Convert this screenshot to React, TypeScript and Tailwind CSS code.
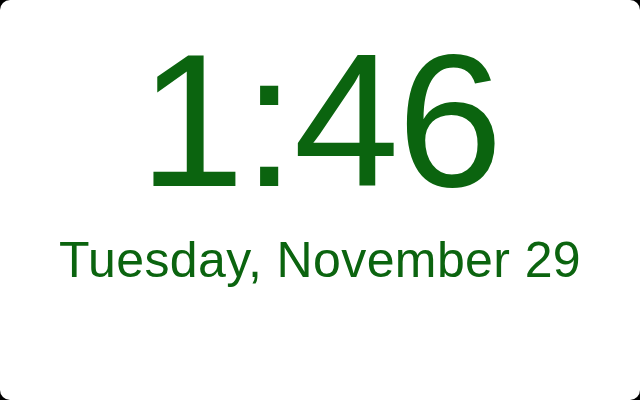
import React from "react"

export default function App() {
  return (
    <div className="w-[640px] h-[400px] bg-black">
      <div className="w-full h-full bg-white rounded-[10px] flex flex-col items-center pt-[25px] text-[#0b640f] font-['Liberation_Sans',Arial,sans-serif]">
        <div className="text-[190px] leading-none tracking-[-2px]">1:46</div>
        <div className="mt-[20px] text-[50px] leading-none tracking-[0.4px]">Tuesday, November 29</div>
      </div>
    </div>
  )
}
